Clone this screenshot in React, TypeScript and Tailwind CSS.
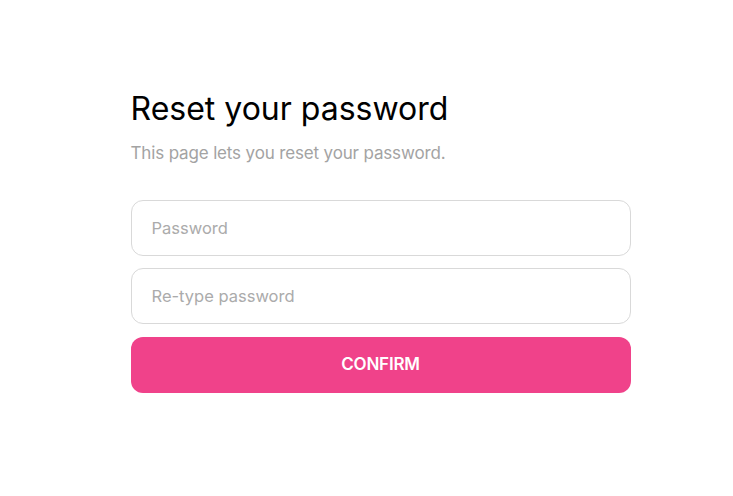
export default function App() {
  return (
    <div
      className="min-h-[496px] w-full bg-white flex justify-center pl-[28px]"
      style={{ fontFamily: "Inter, 'Noto Sans', sans-serif" }}
    >
      <div className="w-[500px] pt-[89px]">
        <h1 className="text-[32px] leading-[40px] text-black">
          Reset your password
        </h1>
        <p className="mt-[12px] text-[17px] leading-[24px] text-[#a3a3a3] tracking-[-0.15px]">
          This page lets you reset your password.
        </p>
        <form className="mt-[35px] flex flex-col gap-[12px]">
          <input
            type="password"
            placeholder="Password"
            className="h-[56px] w-full rounded-[12px] border border-[#d9d9d9] px-[20px] text-[16.5px] outline-none placeholder:text-[#ababab]"
          />
          <input
            type="password"
            placeholder="Re-type password"
            className="h-[56px] w-full rounded-[12px] border border-[#d9d9d9] px-[20px] text-[16.5px] outline-none placeholder:text-[#ababab]"
          />
          <button
            type="button"
            className="mt-px h-[56px] w-full rounded-[12px] bg-[#f0428a] text-white text-[17px] font-semibold tracking-[-0.2px]"
          >
            CONFIRM
          </button>
        </form>
      </div>
    </div>
  );
}
